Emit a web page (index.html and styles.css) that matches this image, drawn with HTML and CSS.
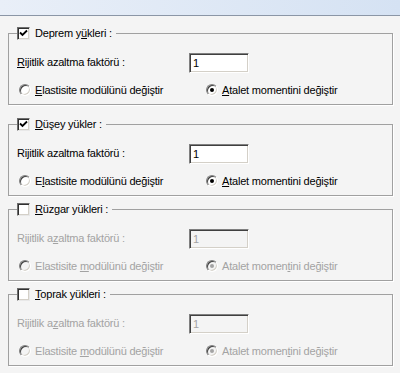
FILE: index.html
```html
<!DOCTYPE html>
<html lang="tr">
<head>
<meta charset="utf-8">
<title>Yükler</title>
<link rel="stylesheet" href="styles.css">
</head>
<body>
<div class="topbar"></div>
<main class="panel">
  <fieldset class="group">
    <legend class="legend">
      <span class="chk"><svg width="9" height="9" viewBox="0 0 9 9"><path d="M1 3.5 L3.5 6 L8 1.5" fill="none" stroke="#000" stroke-width="1.8"/></svg></span>
      <span>Deprem y<u>ü</u>kleri :</span>
    </legend>
    <div class="row">
      <span class="lbl"><u>R</u>ijitlik azaltma faktörü :</span>
      <span class="field">1</span>
    </div>
    <div class="radios">
      <span class="opt"><span class="radio"></span><span><u>E</u>lastisite modülünü değiştir</span></span>
      <span class="opt"><span class="radio on"></span><span><u>A</u>talet momentini değiştir</span></span>
    </div>
  </fieldset>

  <fieldset class="group gap-lg">
    <legend class="legend">
      <span class="chk"><svg width="9" height="9" viewBox="0 0 9 9"><path d="M1 3.5 L3.5 6 L8 1.5" fill="none" stroke="#000" stroke-width="1.8"/></svg></span>
      <span><u>D</u>üşey yükler :</span>
    </legend>
    <div class="row">
      <span class="lbl">Rijitlik azaltma faktörü :</span>
      <span class="field">1</span>
    </div>
    <div class="radios">
      <span class="opt"><span class="radio"></span><span>E<u>l</u>astisite modülünü değiştir</span></span>
      <span class="opt"><span class="radio on"></span><span><u>A</u>talet momentini değiştir</span></span>
    </div>
  </fieldset>

  <fieldset class="group gap-sm off">
    <legend class="legend">
      <span class="chk"></span>
      <span><u>R</u>üzgar yükleri :</span>
    </legend>
    <div class="row">
      <span class="lbl">Rijitlik a<u>z</u>altma faktörü :</span>
      <span class="field">1</span>
    </div>
    <div class="radios">
      <span class="opt"><span class="radio"></span><span>Elastisite <u>m</u>odülünü değiştir</span></span>
      <span class="opt"><span class="radio on"></span><span>Atalet momen<u>t</u>ini değiştir</span></span>
    </div>
  </fieldset>

  <fieldset class="group gap-sm off">
    <legend class="legend">
      <span class="chk"></span>
      <span><u>T</u>oprak yükleri :</span>
    </legend>
    <div class="row">
      <span class="lbl">Rijitlik a<u>z</u>altma faktörü :</span>
      <span class="field">1</span>
    </div>
    <div class="radios">
      <span class="opt"><span class="radio"></span><span>Elastisite <u>m</u>odülünü değiştir</span></span>
      <span class="opt"><span class="radio on"></span><span>Atalet momen<u>t</u>ini değiştir</span></span>
    </div>
  </fieldset>
</main>
</body>
</html>
```
FILE: styles.css
```css
* { box-sizing: border-box; }
html, body { margin: 0; padding: 0; }
body {
  width: 400px;
  height: 373px;
  background: #f4f4f4;
  font-family: "Liberation Sans", Arial, sans-serif;
  font-size: 11px;
  letter-spacing: -0.2px;
  color: #000;
  overflow: hidden;
}
u { text-decoration: underline; text-underline-offset: 1px; }

.topbar {
  height: 16px;
  background: linear-gradient(to right, #e9eff8, #d5e2f3);
  border-bottom: 1px solid #8b96a6;
}

.panel {
  padding: 11px 7px 0 8px;
}

.group {
  margin: 0;
  padding: 13px 8px 8px 8px;
  border: 1px solid #a0a0a0;
  box-shadow: 1px 1px 0 #ffffff;
  min-width: 0;
}
.gap-lg { margin-top: 13px; }
.gap-sm { margin-top: 7px; }

.legend {
  padding: 0 4px 0 0;
  height: 13px;
  display: flex;
  align-items: center;
  gap: 5px;
  line-height: 13px;
}

.chk {
  width: 13px;
  height: 13px;
  background: #fff;
  border-top: 1px solid #6e6e6e;
  border-left: 1px solid #6e6e6e;
  border-right: 1px solid #e8e8e8;
  border-bottom: 1px solid #e8e8e8;
  box-shadow: inset 1px 1px 0 #303030, inset -1px -1px 0 #d4d0c8;
  display: flex;
  align-items: center;
  justify-content: center;
}
.chk svg { display: block; }

.row {
  display: grid;
  grid-template-columns: 172px 60px;
  align-items: center;
  height: 20px;
}
.lbl { margin-top: -2px; }

.field {
  height: 20px;
  background: #fff;
  border-top: 1px solid #808080;
  border-left: 1px solid #808080;
  border-right: 1px solid #ffffff;
  border-bottom: 1px solid #ffffff;
  box-shadow: inset 1px 1px 0 #404040, inset -1px -1px 0 #d4d0c8;
  padding: 2px 0 0 3px;
  line-height: 14px;
}

.radios {
  display: grid;
  grid-template-columns: 187px auto;
  margin-top: 10px;
  height: 13px;
  align-items: center;
}
.opt {
  display: flex;
  align-items: center;
  gap: 4px;
  padding-left: 2px;
}
.radio {
  width: 12px;
  height: 12px;
  border-radius: 50%;
  background: #fff;
  border: 1px solid;
  border-color: #808080 #ffffff #ffffff #808080;
  box-shadow: inset 1px 1px 0 #404040, inset -1px -1px 0 #d4d0c8;
  position: relative;
  flex: none;
}
.radio.on::after {
  content: "";
  position: absolute;
  left: 3px;
  top: 3px;
  width: 4px;
  height: 4px;
  border-radius: 50%;
  background: #000;
}

.off .row, .off .radios { color: #a3a3a3; }
.off .field { background: #f4f4f4; color: #a3a3a3; }
.off .radio { background: #f4f4f4; }
.off .radio.on::after { background: #a3a3a3; }
```
